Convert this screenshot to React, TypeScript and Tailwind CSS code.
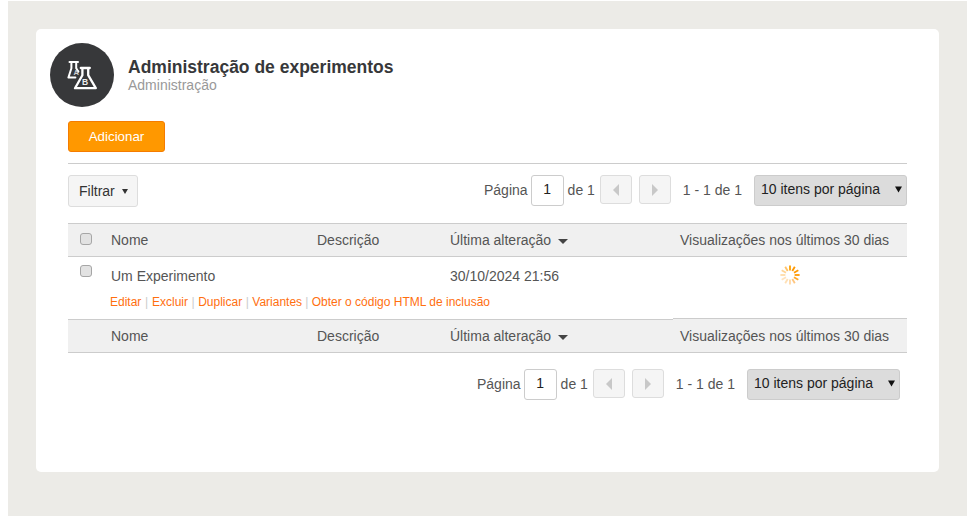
const font = { fontFamily: '"Liberation Sans", Arial, sans-serif' };

function FlaskIcon() {
  return (
    <svg width="36" height="36" viewBox="0 0 36 36" fill="none" stroke="#fff" strokeLinejoin="round" strokeLinecap="round">
      <path d="M5.5 5h8.5M7.4 5v6.2L4.4 20.6h7M12.2 5v6.2l2.2 3.4" strokeWidth="2" />
      <path d="M16.8 11h9M18.4 11v7.2L11 31.2h20.8L24.2 18.2V11" stroke="#37383a" strokeWidth="5" />
      <path d="M16.8 11h9M18.4 11v7.2L11 31.2h20.8L24.2 18.2V11" strokeWidth="2.3" />
      <text x="9.6" y="18" fontSize="7.5" fontWeight="700" fill="#d0d0d1" stroke="none" fontFamily="Liberation Sans">A</text>
      <text x="18" y="28.4" fontSize="8.5" fontWeight="700" fill="#ececec" stroke="none" fontFamily="Liberation Sans">B</text>
    </svg>
  );
}

function Spinner() {
  const lines = [
    [0, "#ffa000"], [30, "#ff9800"], [60, "#ff9800"], [90, "#ff9800"], [120, "#ffa726"], [150, "#ffc680"],
    [180, "#ffd9a6"], [210, "#ffe0b5"], [240, "#ffe3bd"], [270, "#ffdca8"], [300, "#ffd596"], [330, "#ffc266"],
  ] as const;
  return (
    <svg width="20" height="20" viewBox="0 0 20 20">
      {lines.map(([a, c]) => (
        <line key={a} x1="10" y1="0.4" x2="10" y2="5.4" stroke={c} strokeWidth="1.8" transform={`rotate(${a} 10 10)`} />
      ))}
    </svg>
  );
}

function Arrow({ dir }: { dir: "l" | "r" }) {
  return (
    <svg width="6" height="12" viewBox="0 0 6 12">
      <path d={dir === "l" ? "M6 0v12L0 6z" : "M0 0v12l6-6z"} fill="#c8c8c8" />
    </svg>
  );
}

function Pager() {
  return (
    <div className="flex items-start text-[14px] text-[#555]">
      <span className="leading-[30px]">Página</span>
      <div className="ml-[3px] flex h-[31px] w-[33px] items-center justify-center rounded-[3px] border border-[#ccc] bg-white pb-[2px] text-[14px] text-[#222]">1</div>
      <span className="ml-[4px] leading-[30px]">de 1</span>
      <div className="ml-[5px] flex h-[29px] w-[32px] items-center justify-center rounded-[3px] border border-[#ddd] bg-[#f5f5f5]"><Arrow dir="l" /></div>
      <div className="ml-[7px] flex h-[29px] w-[32px] items-center justify-center rounded-[3px] border border-[#ddd] bg-[#f5f5f5]"><Arrow dir="r" /></div>
      <span className="ml-[12px] leading-[30px]">1 - 1 de 1</span>
      <div className="relative ml-[12px] flex h-[31px] w-[153px] items-center rounded-[3px] border border-[#ccc] bg-[#dcdcdc] pb-[2px] pl-[6px] text-[14px] text-[#222]">
        10 itens por página
        <svg className="absolute right-[4.5px] top-[10px]" width="7" height="7" viewBox="0 0 7 7"><path d="M0 0.5h7L3.5 6.5z" fill="#111" /></svg>
      </div>
    </div>
  );
}

function Check() {
  return <div className="h-[12px] w-[12px] rounded-[3px] border border-[#a6a6a6] bg-[#e2e2e2]" />;
}

function HeaderCells() {
  return (
    <>
      <div className="w-[206px] shrink-0">Nome</div>
      <div className="w-[133px] shrink-0">Descrição</div>
      <div className="flex w-[230px] shrink-0 items-center">
        Última alteração
        <svg className="ml-[7px] mt-[3px]" width="10" height="5" viewBox="0 0 10 5"><path d="M0 0h10L5 5z" fill="#444" /></svg>
      </div>
      <div className="whitespace-nowrap">Visualizações nos últimos 30 dias</div>
    </>
  );
}

const Sep = () => <span className="mx-[3.5px] text-[#ccc]">|</span>;

export default function App() {
  return (
    <div className="h-[525px] w-[975px] overflow-hidden bg-white pl-[8px] pt-[1px]" style={font}>
      <div className="h-[515px] w-[959px] bg-[#ecebe7] px-[28px] pt-[28px]">
        <div className="h-[443px] w-[903px] rounded-[5px] bg-white">
          <div className="flex pl-[14px] pt-[14px]">
            <div className="flex h-[64px] w-[64px] items-center justify-center rounded-full bg-[#37383a]"><FlaskIcon /></div>
            <div className="ml-[14px] pt-[14px]">
              <div className="text-[17.5px] font-bold leading-[20px] text-[#37383a]">Administração de experimentos</div>
              <div className="text-[14px] leading-[16px] text-[#999]">Administração</div>
            </div>
          </div>
          <div className="px-[32px]">
            <div className="mt-[14px] flex h-[31px] w-[97px] items-center justify-center rounded-[3px] border border-[#f57c00] bg-[#ff9800] text-[13.33px] text-white">Adicionar</div>
            <div className="mt-[11px] h-px bg-[#ccc]" />
            <div className="mt-[11px] flex h-[32px] items-start justify-between">
              <div className="flex h-[32px] w-[70px] items-center rounded-[3px] border border-[#ddd] bg-[#f5f5f5] pl-[10px] text-[14px] text-[#333]">
                Filtrar
                <svg className="ml-[7.5px] mt-[1px]" width="6" height="5" viewBox="0 0 6 5"><path d="M0 0h6L3 5z" fill="#333" /></svg>
              </div>
              <Pager />
            </div>
            <div className="mt-[16px] text-[14px] text-[#555]">
              <div className="flex h-[34px] items-center border-y border-[#ccc] bg-[#f0f0f0] pl-[12px]">
                <div className="w-[31px] shrink-0 pb-[3px]"><Check /></div>
                <HeaderCells />
              </div>
              <div className="relative h-[62px]">
                <div className="flex pl-[12px]">
                  <div className="w-[31px] shrink-0 pt-[8px]"><Check /></div>
                  <div className="w-[339px] shrink-0 pt-[10px] leading-[18px]">Um Experimento</div>
                  <div className="w-[230px] shrink-0 pt-[10px] leading-[18px]">30/10/2024 21:56</div>
                  <div className="w-[209px] shrink-0 pl-[100px] pt-[8px]"><Spinner /></div>
                </div>
                <div className="absolute left-[42px] top-[37px] whitespace-nowrap text-[12px] leading-[16px] text-[#ff6f0f]">
                  Editar<span className="mx-[3.75px] text-[#ccc]">|</span>Excluir<Sep />Duplicar<Sep />Variantes<span className="mx-[3.25px] text-[#ccc]">|</span>Obter o código HTML de inclusão
                </div>
              </div>
              <div className="relative flex h-[34px] items-center border-y border-[#ccc] bg-[#f0f0f0] pl-[43px]">
                <div className="absolute left-[605px] right-0 top-[-2px] h-px bg-[#ccc]" />
                <div className="absolute left-[605px] right-0 top-[-1px] h-px bg-[#f0f0f0]" />
                <HeaderCells />
              </div>
            </div>
            <div className="mt-[16px] flex justify-end pr-[7px]"><Pager /></div>
          </div>
        </div>
      </div>
    </div>
  );
}
